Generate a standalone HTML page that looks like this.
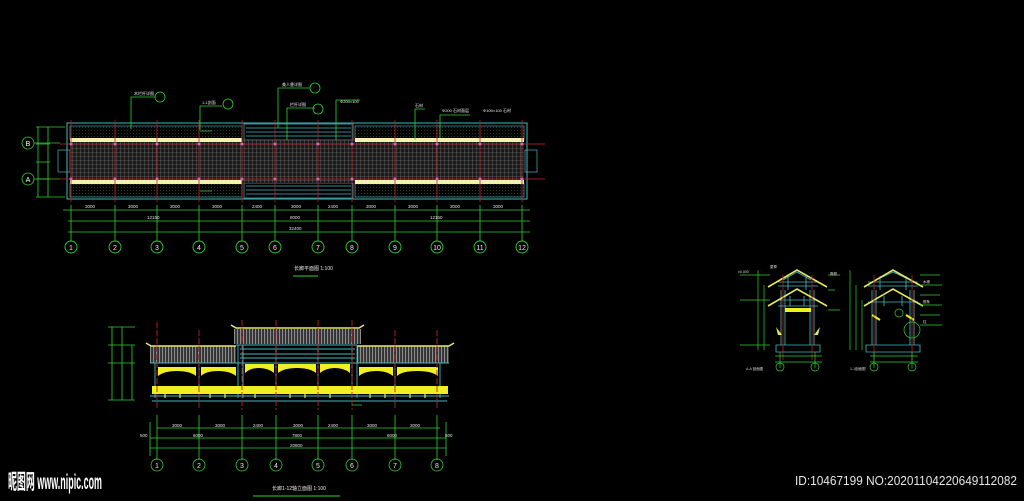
<!DOCTYPE html>
<html><head><meta charset="utf-8"><style>
html,body{margin:0;padding:0;background:#000;width:1024px;height:501px;overflow:hidden}
svg{display:block}
.t{font-family:"Liberation Sans","Noto Sans CJK SC",sans-serif}
</style></head><body>
<svg width="1024" height="501" viewBox="0 0 1024 501" xmlns="http://www.w3.org/2000/svg">
<defs>
<pattern id="grid" width="4" height="4" patternUnits="userSpaceOnUse">
<rect width="4" height="4" fill="#1a1a1a"/>
<path d="M0 0H4M0 0V4" stroke="#8a8a8a" stroke-width="0.6"/>
</pattern>
<pattern id="dots" width="3" height="3" patternUnits="userSpaceOnUse">
<rect width="3" height="3" fill="#050505"/><rect x="1" y="1" width="0.8" height="0.8" fill="#3c5a3c"/>
</pattern>
<pattern id="rail" width="3" height="10" patternUnits="userSpaceOnUse">
<rect width="3" height="10" fill="#333"/><path d="M0.7 0V10" stroke="#bbb" stroke-width="0.7"/>
</pattern>
</defs>
<rect width="1024" height="501" fill="#000"/>

<!-- PLAN -->
<g>
<rect x="67" y="123" width="460" height="76" fill="none" stroke="#3fb8c0" stroke-width="1"/>
<rect x="70" y="126" width="172" height="14" fill="url(#dots)" stroke="#3fb8c0" stroke-width="0.6"/>
<rect x="355" y="126" width="169" height="14" fill="url(#dots)" stroke="#3fb8c0" stroke-width="0.6"/>
<rect x="70" y="183" width="172" height="14" fill="url(#dots)" stroke="#3fb8c0" stroke-width="0.6"/>
<rect x="355" y="183" width="169" height="14" fill="url(#dots)" stroke="#3fb8c0" stroke-width="0.6"/>
<g stroke="#3fb8c0" stroke-width="0.7" fill="none">
<rect x="244" y="124" width="109" height="16"/><path d="M246 128H351M246 132H351M246 136H351M246 186H351M246 190H351M246 194H351"/>
<rect x="244" y="183" width="109" height="15"/>
<rect x="58" y="150" width="12" height="22"/><rect x="525" y="150" width="12" height="22"/>
</g>
<rect x="70" y="140" width="454" height="43" fill="url(#grid)"/>
<rect x="70" y="138" width="172" height="4" fill="#f2f2b0"/><rect x="355" y="138" width="169" height="4" fill="#f2f2b0"/>
<rect x="70" y="180" width="172" height="4" fill="#f2f2b0"/><rect x="355" y="180" width="169" height="4" fill="#f2f2b0"/>
<path d="M60 144H545M60 179H545" stroke="#d02020" stroke-width="0.8"/>
<g stroke="#c02020" stroke-width="0.8">
<path d="M71 120V202M115 120V202M157 120V202M199 120V202M242 120V202M275 120V202M318 120V202M352 120V202M395 120V202M437 120V202M480 120V202M522 120V202"/>
</g>
<g fill="#c070c0"><circle cx="71" cy="144" r="1.5"/><circle cx="115" cy="144" r="1.5"/><circle cx="157" cy="144" r="1.5"/><circle cx="199" cy="144" r="1.5"/><circle cx="242" cy="144" r="1.5"/><circle cx="275" cy="144" r="1.5"/><circle cx="318" cy="144" r="1.5"/><circle cx="352" cy="144" r="1.5"/><circle cx="395" cy="144" r="1.5"/><circle cx="437" cy="144" r="1.5"/><circle cx="480" cy="144" r="1.5"/><circle cx="522" cy="144" r="1.5"/>
<circle cx="71" cy="179" r="1.5"/><circle cx="115" cy="179" r="1.5"/><circle cx="157" cy="179" r="1.5"/><circle cx="199" cy="179" r="1.5"/><circle cx="242" cy="179" r="1.5"/><circle cx="275" cy="179" r="1.5"/><circle cx="318" cy="179" r="1.5"/><circle cx="352" cy="179" r="1.5"/><circle cx="395" cy="179" r="1.5"/><circle cx="437" cy="179" r="1.5"/><circle cx="480" cy="179" r="1.5"/><circle cx="522" cy="179" r="1.5"/></g>
<g stroke="#30d030" stroke-width="0.8" fill="none">
<path d="M131 129V97H155M200 130V106H222M278 128V88H310M287 140V108H315M336 140V100H360M415 140V109H425M440 138V115H470"/>
<path d="M200 131H212M200 191H212"/>
<circle cx="160" cy="97" r="5"/><circle cx="228" cy="104" r="5"/><circle cx="315" cy="88" r="5"/><circle cx="318" cy="109" r="5"/>
</g>
<g fill="#e8e8e8" font-size="4" class="t"><text x="134" y="95">木栏杆详图</text><text x="202" y="104">1-1剖面</text><text x="282" y="86">美人靠详图</text><text x="290" y="106">栏杆详图</text><text x="340" y="103">Φ200×100</text><text x="415" y="107">石材</text><text x="442" y="112">Φ200 石材面层</text><text x="483" y="112">Φ100×100 石材</text></g>
<g stroke="#30d030" stroke-width="0.8" fill="none">
<path d="M63 210H530M68 221H530M68 232H530"/>
<path d="M71 205V241M115 205V241M157 205V241M199 205V241M242 205V241M275 205V241M318 205V241M352 205V241M395 205V241M437 205V241M480 205V241M522 205V241"/>
<path d="M38 127V197M48 127V197M36 127H65M36 197H65M36 144H50M36 179H50M36 162H50"/>
<circle cx="28" cy="143" r="6"/><circle cx="28" cy="179" r="6"/>
<path d="M34 143H60M34 179H60"/>
</g>
<g fill="#e0e0e0" font-size="4.5" class="t">
<text x="85" y="208">3000</text><text x="128" y="208">3000</text><text x="170" y="208">3000</text><text x="212" y="208">3000</text><text x="252" y="208">2400</text><text x="291" y="208">3000</text><text x="328" y="208">2400</text><text x="366" y="208">3000</text><text x="408" y="208">3000</text><text x="450" y="208">3000</text><text x="493" y="208">3000</text>
<text x="147" y="219">12150</text><text x="290" y="219">8000</text><text x="430" y="219">12150</text><text x="289" y="230">32400</text>
</g>
<g fill="#fff" font-size="7" class="t" text-anchor="middle"><text x="28" y="146">B</text><text x="28" y="182">A</text></g>
<g stroke="#30d030" stroke-width="0.9" fill="none">
<circle cx="71" cy="247" r="6"/><circle cx="115" cy="247" r="6"/><circle cx="157" cy="247" r="6"/><circle cx="199" cy="247" r="6"/><circle cx="242" cy="247" r="6"/><circle cx="275" cy="247" r="6"/><circle cx="318" cy="247" r="6"/><circle cx="352" cy="247" r="6"/><circle cx="395" cy="247" r="6"/><circle cx="437" cy="247" r="6"/><circle cx="480" cy="247" r="6"/><circle cx="522" cy="247" r="6"/>
</g>
<g fill="#e8e8e8" font-size="7" class="t" text-anchor="middle">
<text x="71" y="250">1</text><text x="115" y="250">2</text><text x="157" y="250">3</text><text x="199" y="250">4</text><text x="242" y="250">5</text><text x="275" y="250">6</text><text x="318" y="250">7</text><text x="352" y="250">8</text><text x="395" y="250">9</text><text x="437" y="250">10</text><text x="480" y="250">11</text><text x="522" y="250">12</text>
</g>
<text x="294" y="270" fill="#e8e8e8" font-size="5" class="t">长廊平面图 1:100</text>
<path d="M293 276H318" stroke="#30d030" stroke-width="1"/>
</g>

<!-- ELEVATION -->
<g>
<rect x="234" y="329" width="127" height="15" fill="url(#rail)"/>
<path d="M231 325L236 328H359L364 325" stroke="#e8e870" stroke-width="1.5" fill="none"/>
<rect x="150" y="346" width="86" height="17" fill="url(#rail)"/>
<rect x="357" y="346" width="92" height="17" fill="url(#rail)"/>
<path d="M146 343L151 346H236M357 346H449L454 343" stroke="#e8e870" stroke-width="1.5" fill="none"/>
<g stroke="#3fb8c0" stroke-width="0.9" fill="none">
<path d="M150 363H449M236 345H357M240 349H355M240 354H355M240 358H355"/>
<path d="M155 363V398M199 363V398M238 345V398M243 345V398M276 345V398M318 345V398M352 345V398M357 345V398M395 363V398M440 363V398"/>
<path d="M150 396H449M152 401H447"/>
</g>
<g fill="#f0f020">
<path d="M158 367H196V376Q190 371 177 371Q164 371 158 376Z"/><path d="M201 367H236V376Q230 371 218 371Q206 371 201 376Z"/>
<path d="M245 364H274V373Q268 368 259 368Q250 368 245 373Z"/><path d="M278 364H316V373Q310 368 297 368Q284 368 278 373Z"/><path d="M320 364H350V373Q344 368 335 368Q326 368 320 373Z"/>
<path d="M359 367H393V376Q387 371 376 371Q365 371 359 376Z"/><path d="M397 367H438V376Q432 371 417 371Q402 371 397 376Z"/>
<rect x="152" y="386" width="296" height="8"/>
</g>
<g stroke="#c8c840" stroke-width="1.5"><path d="M165 394V398M180 394V398M210 394V398M225 394V398M255 394V398M290 394V398M305 394V398M330 394V398M370 394V398M385 394V398M410 394V398M425 394V398"/></g>
<g stroke="#c02020" stroke-width="0.9" stroke-dasharray="6 2"><path d="M157 322V410M199 330V410M242 320V410M276 320V410M318 320V410M352 320V410M395 330V410M437 330V410"/></g>
<g stroke="#30d030" stroke-width="0.8" fill="none">
<path d="M108 327H135M108 345H135M108 363H135M108 400H135M112 327V400M122 327V400M132 345V400"/>
<path d="M157 428H440M150 438H446M150 448H446M150 422V456M446 422V456M157 415V460M199 415V460M242 415V460M276 415V460M318 415V460M352 415V460M395 415V460M437 415V460M352 405H362"/>
<circle cx="157" cy="465" r="6"/><circle cx="199" cy="465" r="6"/><circle cx="242" cy="465" r="6"/><circle cx="276" cy="465" r="6"/><circle cx="318" cy="465" r="6"/><circle cx="352" cy="465" r="6"/><circle cx="395" cy="465" r="6"/><circle cx="437" cy="465" r="6"/>
</g>
<g fill="#e8e8e8" font-size="7" class="t" text-anchor="middle">
<text x="157" y="468">1</text><text x="199" y="468">2</text><text x="242" y="468">3</text><text x="276" y="468">4</text><text x="318" y="468">5</text><text x="352" y="468">6</text><text x="395" y="468">7</text><text x="437" y="468">8</text>
</g>
<g fill="#e0e0e0" font-size="4.5" class="t">
<text x="172" y="427">3000</text><text x="215" y="427">3000</text><text x="253" y="427">2400</text><text x="293" y="427">3000</text><text x="328" y="427">2400</text><text x="367" y="427">3000</text><text x="410" y="427">3000</text>
<text x="193" y="437">6000</text><text x="292" y="437">7800</text><text x="387" y="437">6000</text><text x="290" y="447">20800</text><text x="140" y="437">500</text><text x="445" y="437">500</text>
</g>
<text x="272" y="490" fill="#e8e8e8" font-size="5" class="t">长廊1-12轴立面图  1:100</text>
<path d="M253 496H340" stroke="#30d030" stroke-width="1"/>
</g>

<!-- SECTIONS -->
<g>
<g stroke="#3fb8c0" stroke-width="0.8" fill="none">
<path d="M781 290V345M785 290V345M810 290V345M814 290V345M776 345H820V352H776ZM778 306H818M778 300H818"/>
<path d="M778 282H818M778 286H818M788 276V290M806 276V290M790 296V306M804 296V306M783 280L797 272L811 280"/>
<path d="M872 290V345M876 290V345M910 290V345M914 290V345M866 345H920V352H866Z"/>
<path d="M868 282H918M868 286H918M880 276V290M906 276V290M884 296V306M902 296V306M868 302H918M876 280L893 272L910 280"/>
</g>
<g stroke="#e8e860" stroke-width="1.6" fill="none">
<path d="M768 287L797 270L827 287M768 306L797 289L827 306"/>
<path d="M864 287L893 270L923 287M864 306L893 289L923 306"/>
</g>
<rect x="785" y="308" width="26" height="4" fill="#f0f020"/>
<path d="M776 327L782 335H778ZM820 327L814 335H818Z" fill="#e8e860"/>
<path d="M872 315L880 320M906 315L914 320" stroke="#f0f020" stroke-width="2"/>
<g stroke="#c02020" stroke-width="0.8"><path d="M783 275V360M812 275V360M874 275V360M912 275V360"/></g>
<g stroke="#30d030" stroke-width="0.7" fill="none">
<path d="M758 270V350M764 285V350M740 275H770M740 300H770M740 345H770M775 356H822M775 362H822M780 352V368M815 352V368"/>
<path d="M850 270V350M856 285V350M862 300V350M870 356H918M870 362H918M874 352V368M912 352V368"/>
<path d="M828 275H840M828 290H835M828 310H840M920 275H940M920 285H942M920 295H940M920 305H942M920 315H940M920 325H942"/>
<circle cx="780" cy="367" r="4"/><circle cx="815" cy="367" r="4"/><circle cx="874" cy="367" r="4"/><circle cx="912" cy="367" r="4"/>
<circle cx="899" cy="313" r="4"/><circle cx="912" cy="330" r="8"/>
</g>
<g fill="#ddd" font-size="3.5" class="t"><text x="738" y="273">±0.000</text><text x="770" y="268">屋脊</text><text x="830" y="275">脊檩</text><text x="923" y="283">木椽</text><text x="923" y="303">檩条</text><text x="923" y="323">柱</text><text x="746" y="370">A-A 剖面图</text><text x="850" y="370">1-1剖面图</text></g>
</g>

<!-- watermark -->
<text x="8" y="489" fill="#fff" font-size="21" font-weight="bold" class="t" textLength="94" lengthAdjust="spacingAndGlyphs">昵图网 www.nipic.com</text>
<text x="795" y="485" fill="#e6e6e6" font-size="12.5" class="t" textLength="222" lengthAdjust="spacingAndGlyphs">ID:10467199 NO:20201104220649112082</text>
</svg>
</body></html>
